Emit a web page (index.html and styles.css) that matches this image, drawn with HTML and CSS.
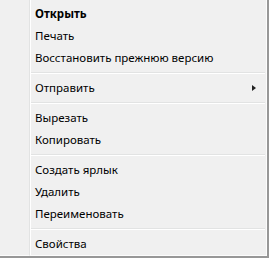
FILE: index.html
```html
<!DOCTYPE html>
<html>
<head>
  <title>Context menu</title>
  <link rel="stylesheet" href="styles.css">
</head>
<body>
  <div class="menu">
    <div class="gutter"></div>
    <div class="list">
      <ul class="items">
        <li class="item default">Открыть</li>
        <li class="item">Печать</li>
        <li class="item">Восстановить прежнюю версию</li>
        <li class="sep"></li>
        <li class="item has-sub">Отправить<span class="arrow"></span></li>
        <li class="sep"></li>
        <li class="item">Вырезать</li>
        <li class="item">Копировать</li>
        <li class="sep"></li>
        <li class="item">Создать ярлык</li>
        <li class="item">Удалить</li>
        <li class="item">Переименовать</li>
        <li class="sep"></li>
        <li class="item">Свойства</li>
      </ul>
    </div>
  </div>
</body>
</html>
```

FILE: styles.css
```css
html, body {
  margin: 0;
  padding: 0;
  background-color: #f0f0f0;
}

body {
  font-family: "Noto Sans", "Open Sans", sans-serif;
  font-size: 11.5px;
  color: #000;
}

.menu {
  display: flex;
  width: 269px;
  height: 258px;
  box-sizing: border-box;
  border-right: 2px solid #979797;
  border-bottom: 2px solid #979797;
  background-color: #f0f0f0;
}

.gutter {
  width: 29px;
  flex-shrink: 0;
  border-bottom: 1px solid #fcfcfc;
}

.list {
  flex: 1;
  border-left: 1px solid #e2e3e3;
  border-right: 1px solid #fcfcfc;
  border-bottom: 1px solid #fcfcfc;
}

.items {
  list-style: none;
  margin: 0;
  padding: 3px 0 0 0;
  height: 100%;
  box-sizing: border-box;
  border-left: 1px solid #fff;
}

.item {
  position: relative;
  height: 22px;
  line-height: 22px;
  padding-left: 4px;
  white-space: nowrap;
}

.item.default {
  font-weight: bold;
}

.arrow {
  position: absolute;
  right: 10px;
  top: 8px;
  width: 0;
  height: 0;
  border-top: 3.5px solid transparent;
  border-bottom: 3.5px solid transparent;
  border-left: 4px solid #222;
}

.sep {
  height: 8px;
  box-sizing: border-box;
  padding-top: 3px;
  margin-right: 1px;
}

.sep::before {
  content: "";
  display: block;
  height: 1px;
  background-color: #e2e3e3;
  border-bottom: 1px solid #fff;
}
```
